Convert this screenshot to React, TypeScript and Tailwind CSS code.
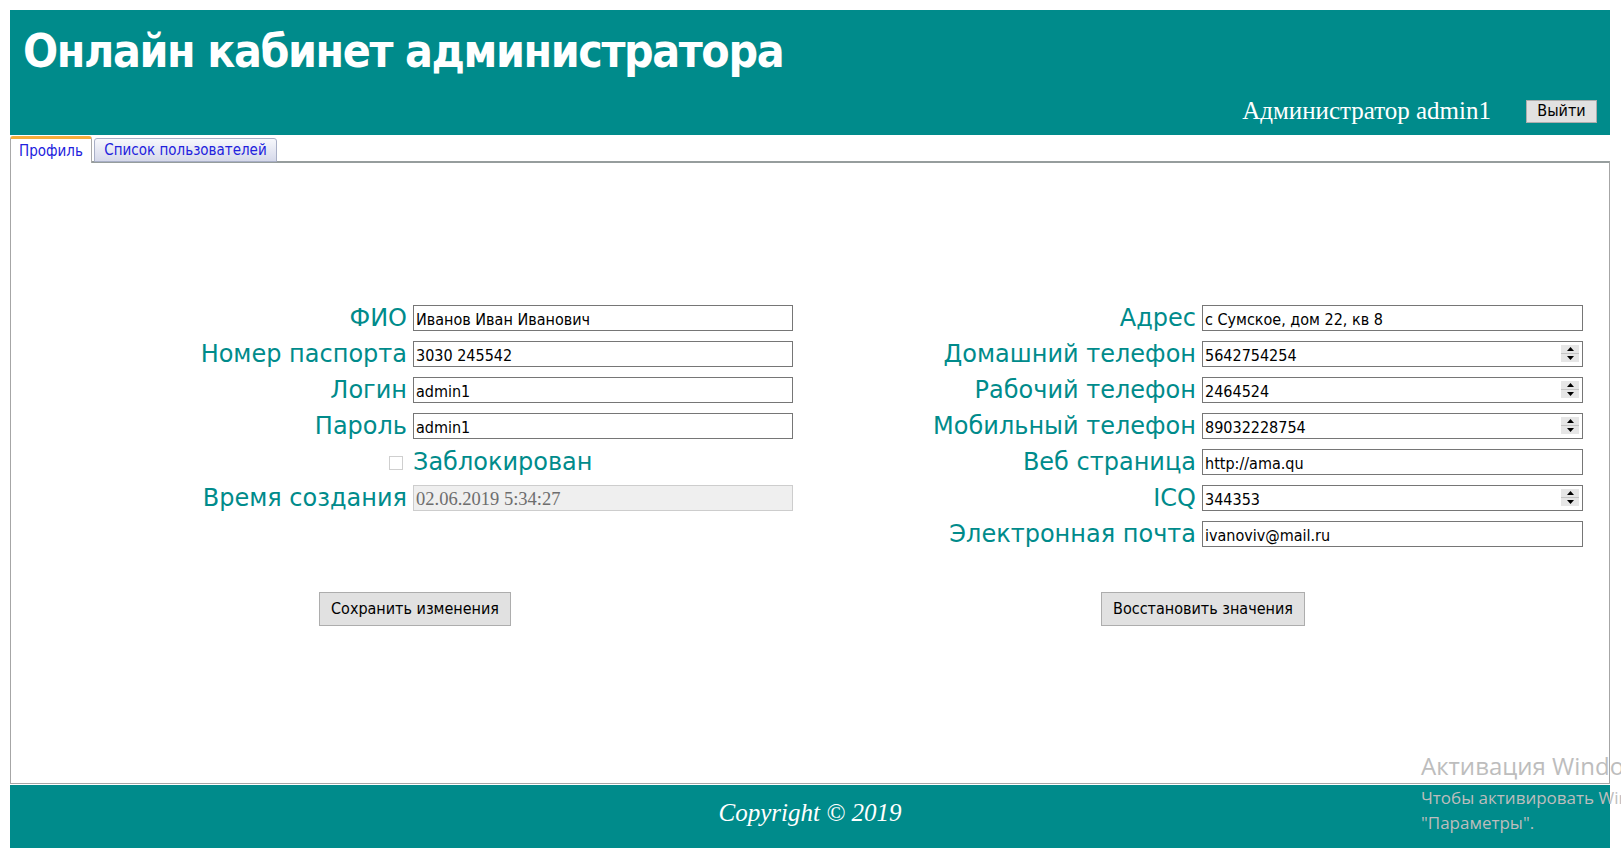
import React from 'react';

const teal = 'bg-[#008b8b]';

function Spinner() {
  return (
    <div className="absolute right-[4px] top-[4px] flex h-[17px] w-[18px] flex-col bg-[#e6e6e6]">
      <div className="flex flex-1 items-center justify-center border-b border-[#c4c4c4]">
        <svg width="7" height="4" viewBox="0 0 7 4"><path d="M3.5 0L7 4H0z" fill="#000" /></svg>
      </div>
      <div className="flex flex-1 items-center justify-center">
        <svg width="7" height="4" viewBox="0 0 7 4"><path d="M0 0h7L3.5 4z" fill="#000" /></svg>
      </div>
    </div>
  );
}

function Field({ value, spin = false }: { value: string; spin?: boolean }) {
  return (
    <div className="relative h-[26px]">
      <input
        readOnly
        value={value}
        className="h-[26px] w-full border border-[#767676] bg-white px-[2px] pt-[3px] text-[16px] text-black outline-none"
      />
      {spin && <Spinner />}
    </div>
  );
}

function Label({ children }: { children: React.ReactNode }) {
  return (
    <div className="text-right font-['DejaVu_Sans',sans-serif] text-[24px] leading-[26px] text-[#008b8b]">{children}</div>
  );
}

export default function App() {
  return (
    <div className="relative min-h-[859px] overflow-hidden bg-white px-[10px] pt-[10px] font-['DejaVu_Sans_Condensed','DejaVu_Sans',sans-serif]">
      <header className={`flex h-[125px] w-[1600px] flex-col ${teal}`}>
        <h1 className="ml-[13px] mt-[17px] text-[46px] font-bold leading-[48px] tracking-[-1.4px] text-white">
          Онлайн кабинет администратора
        </h1>
        <div className="mt-auto flex items-center justify-end pb-[11px] pr-[13px]">
          <span className="font-['Liberation_Serif',serif] text-[25px] leading-[26px] text-white">Администратор admin1</span>
          <button className="ml-[35px] h-[23px] w-[71px] border border-[#adadad] bg-[#e1e1e1] text-[16px] font-normal leading-none text-black">
            Выйти
          </button>
        </div>
      </header>

      <div className="relative z-10 mt-[1px] flex h-[27px] items-end gap-[2px]">
        <div className="flex h-[27px] w-[82px] items-center justify-center rounded-t-[3px] border-x border-t-[3px] border-x-[#a9a9a9] border-t-[#f5ad3c] bg-white text-[15px] text-[#2222dd]">
          Профиль
        </div>
        <div className="mb-[1px] flex h-[24px] w-[183px] items-center justify-center rounded-t-[3px] border border-[#a8afc6] bg-gradient-to-b from-[#f7f8fc] to-[#d6d9ea] pt-[1px] text-[15px] text-[#2222dd]">
          Список пользователей
        </div>
      </div>

      <main className="-mt-[2px] flex h-[623px] w-[1600px] flex-col border-x border-b border-t-2 border-x-[#a6a6a6] border-b-[#a6a6a6] border-t-[#969d9d]">
        <div className="mt-[142px] flex items-start">
          <div className="ml-[189px] grid grid-cols-[207px_380px] items-center gap-x-[6px] gap-y-[10px]">
            <Label>ФИО</Label>
            <Field value="Иванов Иван Иванович" />
            <Label>Номер паспорта</Label>
            <Field value="3030 245542" />
            <Label>Логин</Label>
            <Field value="admin1" />
            <Label>Пароль</Label>
            <Field value="admin1" />
            <div className="flex h-[26px] items-center justify-end pr-[4px] pt-[2px]">
              <div className="h-[14px] w-[14px] border border-[#cfcfcf] bg-white" />
            </div>
            <div className="font-['DejaVu_Sans',sans-serif] text-[24px] leading-[26px] text-[#008b8b]">Заблокирован</div>
            <Label>Время создания</Label>
            <input
              readOnly
              value="02.06.2019 5:34:27"
              className="h-[26px] w-full border border-[#cdcdcd] bg-[#efefef] px-[2px] pt-[3px] font-['Liberation_Serif',serif] text-[18.5px] text-[#6d6d6d] outline-none"
            />
          </div>

          <div className="ml-[123px] grid grid-cols-[280px_381px] items-center gap-x-[6px] gap-y-[10px]">
            <Label>Адрес</Label>
            <Field value="с Сумское, дом 22, кв 8" />
            <Label>Домашний телефон</Label>
            <Field value="5642754254" spin />
            <Label>Рабочий телефон</Label>
            <Field value="2464524" spin />
            <Label>Мобильный телефон</Label>
            <Field value="89032228754" spin />
            <Label>Веб страница</Label>
            <Field value="http://ama.qu" />
            <Label>ICQ</Label>
            <Field value="344353" spin />
            <Label>Электронная почта</Label>
            <Field value="ivanoviv@mail.ru" />
          </div>
        </div>

        <div className="mt-[45px] grid grid-cols-2">
          <div className="flex justify-center pl-[9px]">
            <button className="h-[34px] border border-[#adadad] bg-[#e1e1e1] px-[11px] text-[16px] text-black">
              Сохранить изменения
            </button>
          </div>
          <div className="flex justify-center pr-[13px]">
            <button className="h-[34px] border border-[#adadad] bg-[#e1e1e1] px-[11px] text-[16px] text-black">
              Восстановить значения
            </button>
          </div>
        </div>
      </main>

      <footer className={`mt-[1px] flex h-[63px] w-[1600px] items-center justify-center pb-[8px] ${teal}`}>
        <span className="font-['Liberation_Serif',serif] text-[25px] italic text-white">Copyright © 2019</span>
      </footer>

      <div className="pointer-events-none absolute left-[1421px] top-[751px] whitespace-nowrap font-['Open_Sans',sans-serif] text-[#bdbdbd]">
        <div className="text-[24px] leading-[30px]">Активация Windows</div>
        <div className="mt-[4px] text-[17px] leading-[25px]">Чтобы активировать Windows, перейдите в раздел</div>
        <div className="text-[17px] leading-[25px]">"Параметры".</div>
      </div>
    </div>
  );
}
